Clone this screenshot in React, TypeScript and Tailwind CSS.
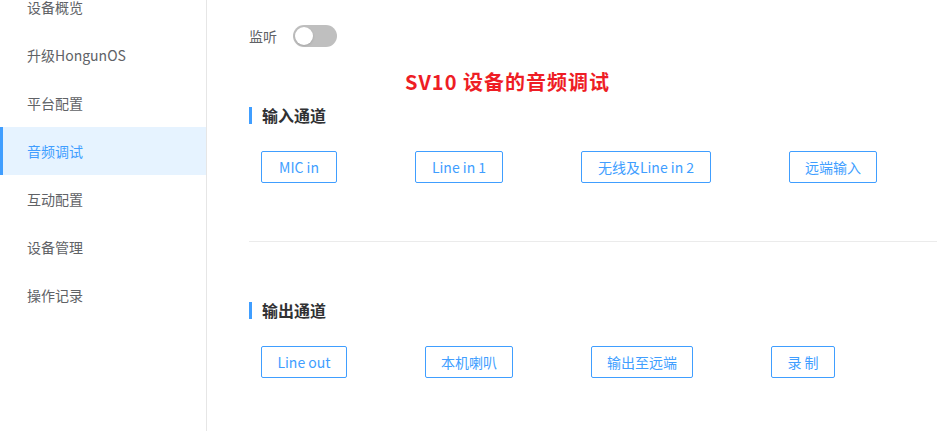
import { useState } from "react";

const menuItems = [
  "设备概览",
  "升级HongunOS",
  "平台配置",
  "音频调试",
  "互动配置",
  "设备管理",
  "操作记录",
];

const inputChannels = [
  { label: "MIC in", width: "w-[76px]" },
  { label: "Line in 1", width: "w-[88px]" },
  { label: "无线及Line in 2", width: "w-[130px]" },
  { label: "远端输入", width: "w-[88px]" },
];

const outputChannels = [
  { label: "Line out", width: "w-[86px]" },
  { label: "本机喇叭", width: "w-[88px]" },
  { label: "输出至远端", width: "w-[102px]" },
  { label: "录 制", width: "w-[64px]" },
];

function SectionTitle({ title }: { title: string }) {
  return (
    <div className="flex h-6 items-center gap-[10px]">
      <span className="h-[17px] w-[3px] bg-[#409eff]" />
      <span className="text-base font-semibold text-[#303133]">{title}</span>
    </div>
  );
}

function ChannelRow({ items }: { items: { label: string; width: string }[] }) {
  return (
    <div className="flex gap-[78px] pl-3">
      {items.map((item) => (
        <button
          key={item.label}
          className={`${item.width} h-8 rounded-[2px] border border-[#409eff] bg-white text-sm whitespace-nowrap text-[#409eff]`}
        >
          {item.label}
        </button>
      ))}
    </div>
  );
}

export default function App() {
  const [listening, setListening] = useState(false);

  return (
    <div
      className="flex h-[431px] w-[937px] overflow-hidden bg-white"
      style={{ fontFamily: '"Noto Sans CJK SC", "Noto Sans", sans-serif' }}
    >
      <aside className="w-[207px] shrink-0 border-r border-[#e6e6e6]">
        <ul className="-mt-[17px]">
          {menuItems.map((item) => {
            const active = item === "音频调试";
            return (
              <li
                key={item}
                className={
                  active
                    ? "flex h-12 items-center border-l-[3px] border-[#409eff] bg-[#e6f3ff] pl-6 text-sm text-[#409eff]"
                    : "flex h-12 items-center pl-[27px] text-sm text-[#606266]"
                }
              >
                {item}
              </li>
            );
          })}
        </ul>
      </aside>

      <main className="flex-1 pt-[25px] pl-[42px]">
        <div className="flex h-[22px] items-center gap-4">
          <span className="text-sm text-[#606266]">监听</span>
          <button
            onClick={() => setListening(!listening)}
            className={`relative h-[22px] w-[44px] rounded-full ${listening ? "bg-[#409eff]" : "bg-[#bfbfbf]"}`}
          >
            <span
              className={`absolute top-[2px] h-[18px] w-[18px] rounded-full bg-white shadow ${listening ? "left-[24px]" : "left-[2px]"}`}
            />
          </button>
        </div>

        <h1 className="mt-[21px] pl-[156px] text-xl leading-7 font-bold tracking-[1px] text-[#ee1d25]">
          SV10 设备的音频调试
        </h1>

        <div className="mt-[7px]">
          <SectionTitle title="输入通道" />
        </div>
        <div className="mt-6">
          <ChannelRow items={inputChannels} />
        </div>

        <div className="mt-[58px] h-px bg-[#ebebeb]" />

        <div className="mt-[56px]">
          <SectionTitle title="输出通道" />
        </div>
        <div className="mt-6">
          <ChannelRow items={outputChannels} />
        </div>
      </main>
    </div>
  );
}
